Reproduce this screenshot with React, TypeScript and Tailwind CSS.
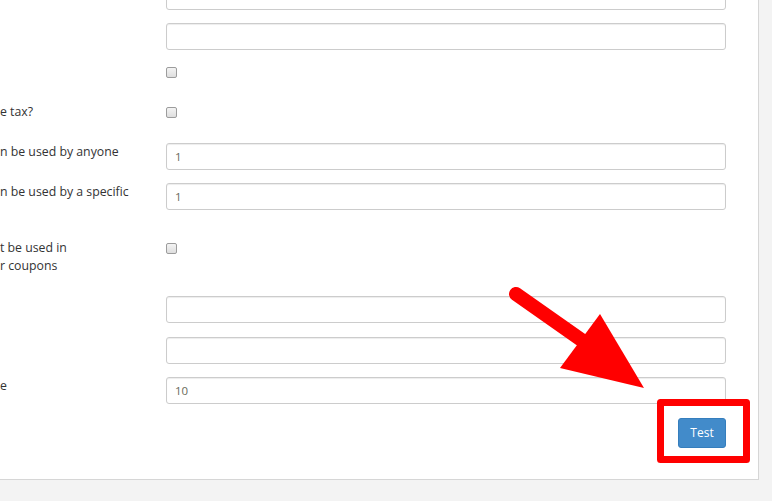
import React from "react";

type Row =
  | { kind: "input"; label?: string[]; value?: string; h: string }
  | { kind: "check"; label?: string[]; h: string };

const rows: Row[] = [
  { kind: "input", h: "h-[40px]" },
  { kind: "input", h: "h-[40px]" },
  { kind: "check", h: "h-[40px]" },
  { kind: "check", label: ["e tax?"], h: "h-[40px]" },
  { kind: "input", label: ["n be used by anyone"], value: "1", h: "h-[40px]" },
  { kind: "input", label: ["n be used by a specific"], value: "1", h: "h-[56px]" },
  { kind: "check", label: ["t be used in", "r coupons"], h: "h-[57px]" },
  { kind: "input", h: "h-[41px]" },
  { kind: "input", h: "h-[40px]" },
  { kind: "input", label: ["e"], value: "10", h: "h-[41px]" },
];

function Field({ row }: { row: Row }) {
  return (
    <div className={`flex items-start ${row.h}`}>
      <div className="w-[166px] shrink-0 text-[12.3px] leading-[18px] text-[#333]">
        {row.label?.map((l) => (
          <div key={l}>{l}</div>
        ))}
      </div>
      {row.kind === "input" ? (
        <input
          readOnly
          defaultValue={row.value ?? ""}
          className="w-[560px] h-[27px] rounded-[3px] border border-[#ccc] bg-white pl-[8px] text-[11.5px] text-[#6a6a5a] shadow-[inset_0_1px_1px_rgba(0,0,0,0.075)] outline-none"
        />
      ) : (
        <input
          type="checkbox"
          className="mt-[4px] appearance-none w-[11px] h-[11px] rounded-[2px] border border-[#9c9c9c] bg-gradient-to-b from-[#f4f4f4] to-[#dedede]"
        />
      )}
    </div>
  );
}

export default function App() {
  return (
    <div
      className="relative w-[772px] h-[501px] overflow-hidden bg-[#f3f3f3]"
      style={{ fontFamily: '"Open Sans", "Liberation Sans", sans-serif' }}
    >
      {/* panel */}
      <div className="w-[759px] h-[480px] bg-white border-r border-b border-[#d6d6d6] overflow-hidden">
        <div className="-mt-[17px] flex flex-col">
          {rows.map((r, i) => (
            <Field key={i} row={r} />
          ))}
          <div className="flex w-[726px] justify-end">
            <button className="w-[48px] h-[30px] rounded-[3px] border border-[#357ebd] bg-[#428bca] text-[12px] text-white">
              Test
            </button>
          </div>
        </div>
      </div>

      {/* annotation */}
      <svg className="absolute inset-0 pointer-events-none" width="772" height="501" viewBox="0 0 772 501">
        <line x1="516" y1="294" x2="590" y2="346" stroke="#ff0000" strokeWidth="14" strokeLinecap="round" />
        <polygon points="600,314 560,368 644,388" fill="#ff0000" />
        <rect
          x="660.5"
          y="402.5"
          width="86"
          height="57"
          fill="none"
          stroke="#ff0000"
          strokeWidth="7"
          strokeLinejoin="round"
        />
      </svg>
    </div>
  );
}
